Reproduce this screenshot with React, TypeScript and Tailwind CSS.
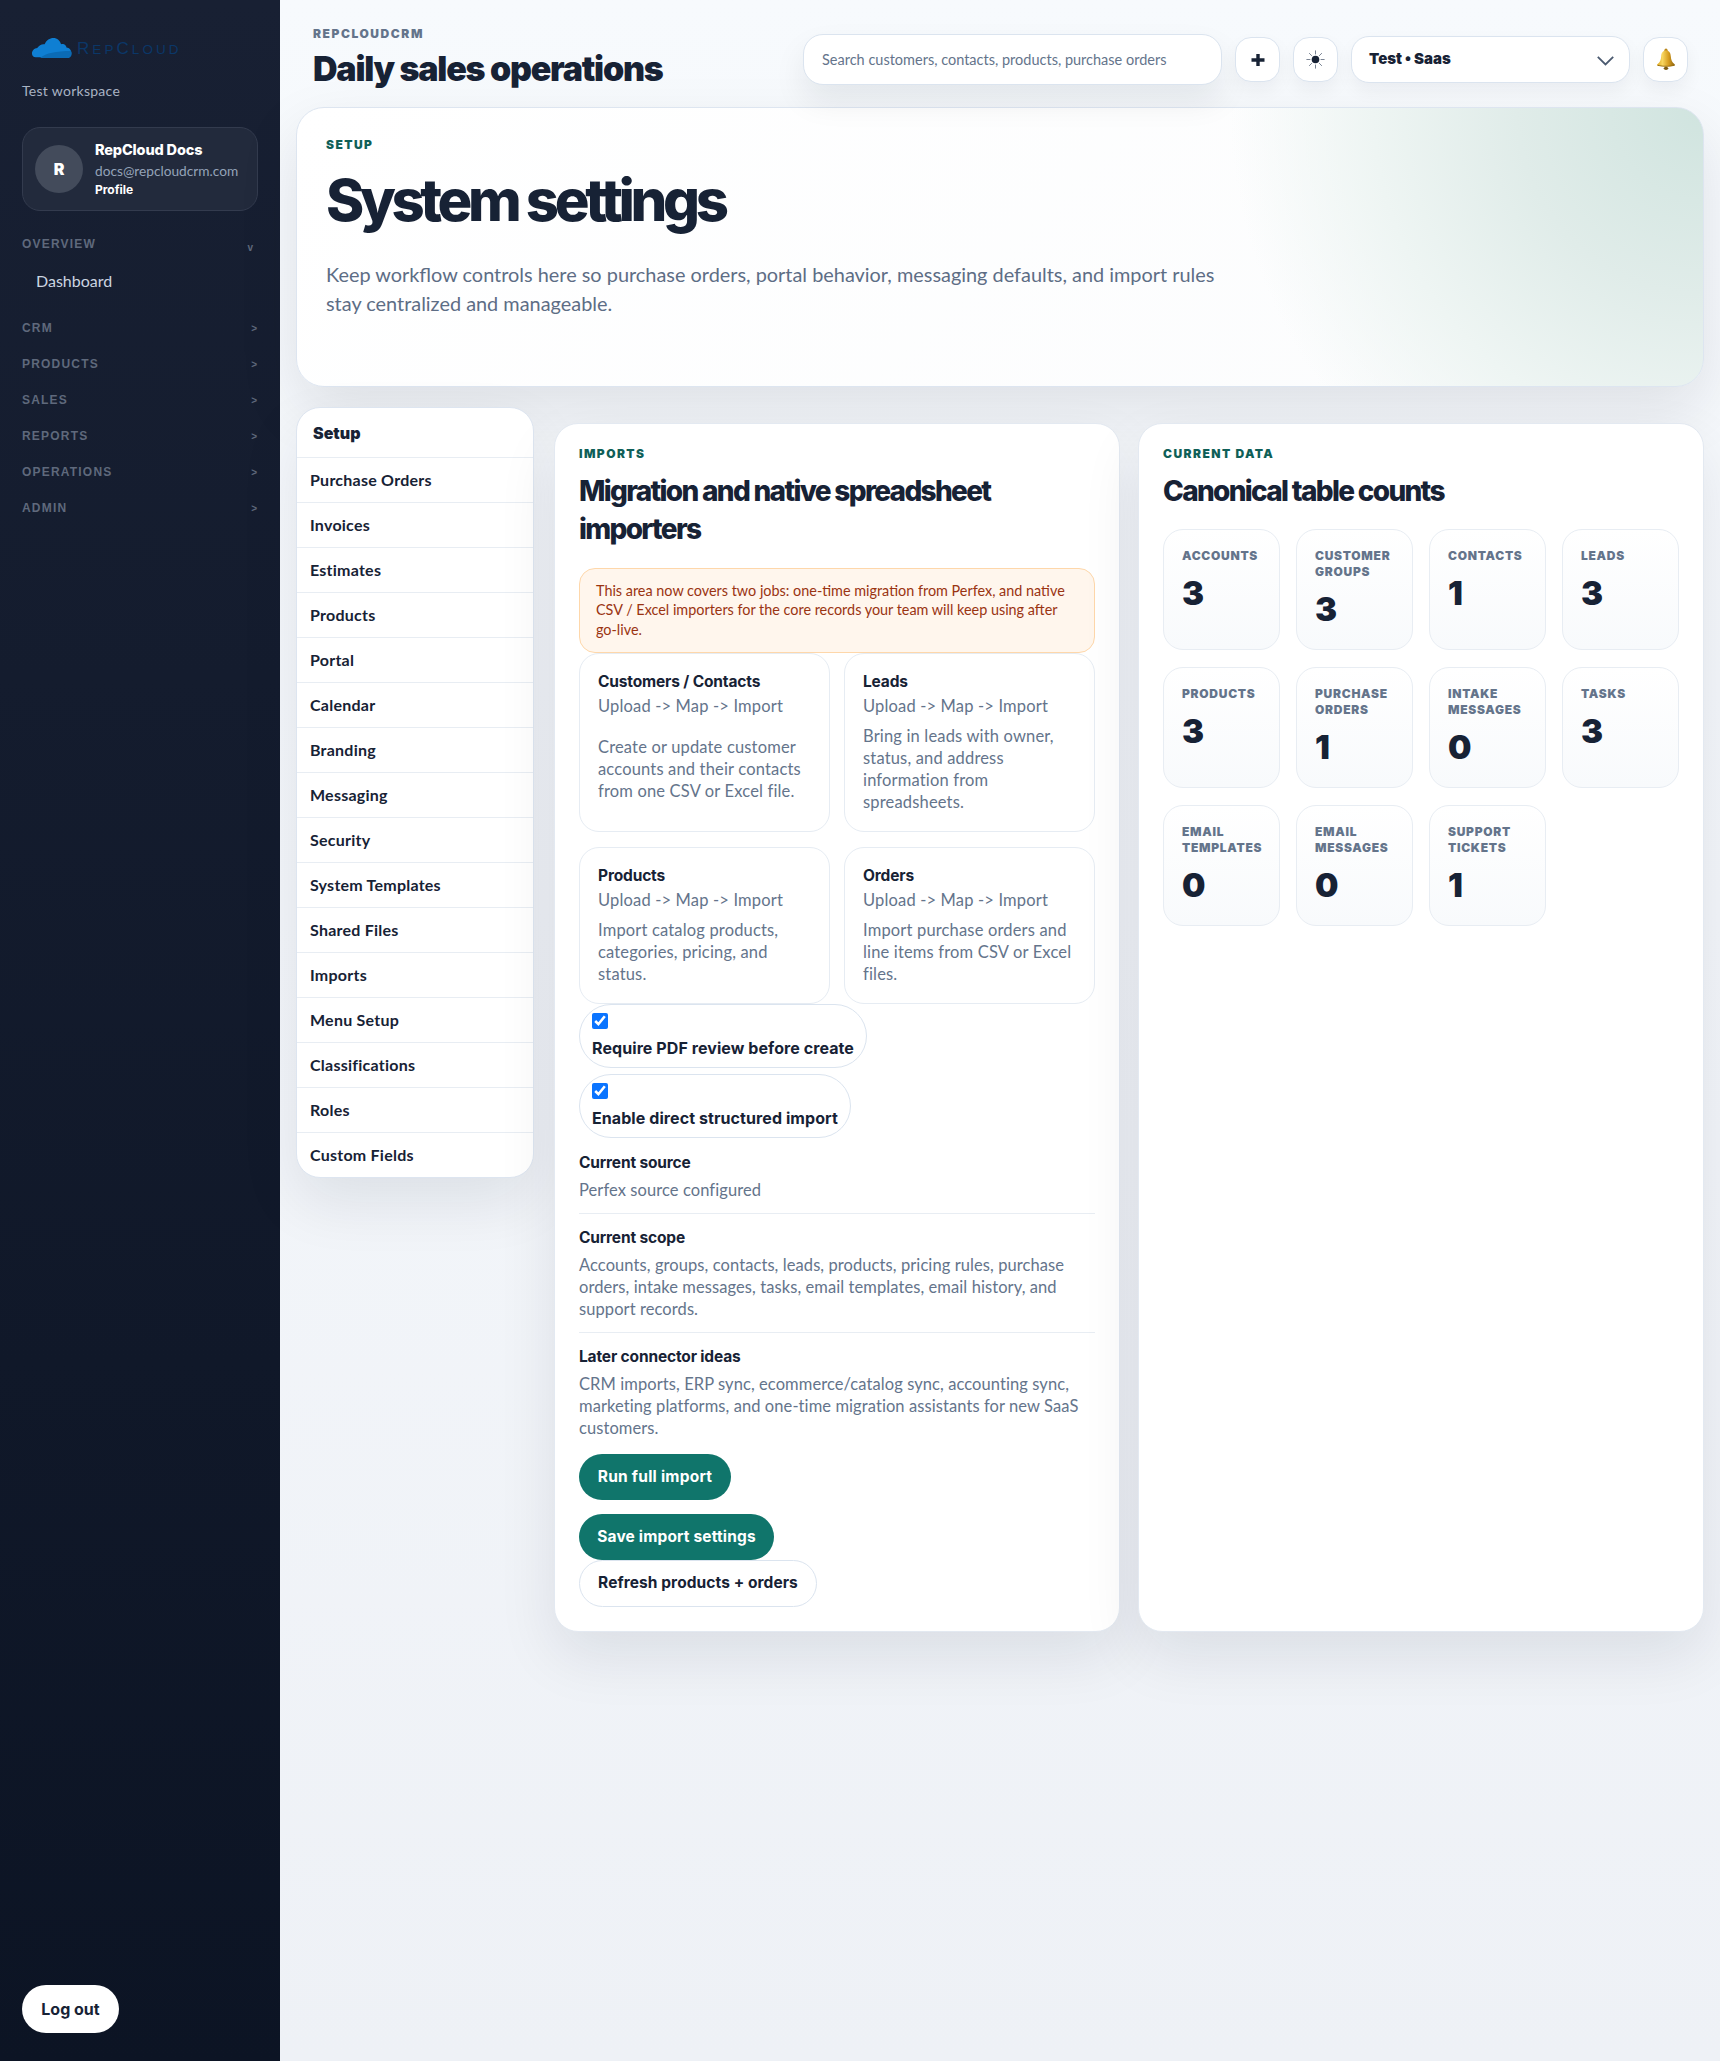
const sans = "font-['Lato','Noto_Sans',sans-serif]"
const heavy = "font-['Inter','Noto_Sans',sans-serif]"

const navGroups = ["CRM", "PRODUCTS", "SALES", "REPORTS", "OPERATIONS", "ADMIN"]

const setupLinks = [
  "Purchase Orders",
  "Invoices",
  "Estimates",
  "Products",
  "Portal",
  "Calendar",
  "Branding",
  "Messaging",
  "Security",
  "System Templates",
  "Shared Files",
  "Imports",
  "Menu Setup",
  "Classifications",
  "Roles",
  "Custom Fields",
]

const importers = [
  { title: "Customers / Contacts", text: "Create or update customer accounts and their contacts from one CSV or Excel file." },
  { title: "Leads", text: "Bring in leads with owner, status, and address information from spreadsheets." },
  { title: "Products", text: "Import catalog products, categories, pricing, and status." },
  { title: "Orders", text: "Import purchase orders and line items from CSV or Excel files." },
]

const counts = [
  { label: "Accounts", value: 3 },
  { label: "Customer groups", value: 3 },
  { label: "Contacts", value: 1 },
  { label: "Leads", value: 3 },
  { label: "Products", value: 3 },
  { label: "Purchase orders", value: 1 },
  { label: "Intake messages", value: 0 },
  { label: "Tasks", value: 3 },
  { label: "Email templates", value: 0 },
  { label: "Email messages", value: 0 },
  { label: "Support tickets", value: 1 },
]

function Eyebrow({ children }: { children: React.ReactNode }) {
  return <div className={`${heavy} text-[12px] leading-[16px] font-black uppercase tracking-[0.12em] text-[#0f5f58]`}>{children}</div>
}

function Logo() {
  return (
    <div className="flex h-[22px] items-center">
      <svg width="42" height="22" viewBox="0 0 42 22">
        <path d="M1 17c0-3 2.400-5.400 5.400-5.600C8.500 8.200 11.500 7 14 7.600 15.800 3.200 19.500 1 23 1c4 0 7 2.800 8 6.400 1-.3 2.200-.2 3 .2 1.300.6 2.300 1.800 2.600 3.100 2.900.3 5 2.700 5 5.600 0 2.300-1 4.700-3.500 4.700H5c-2.500 0-4-2-4-4z" fill="#0f7fd3" transform="scale(0.97)" />
        <path d="M9 21c6-5 16-7 31-7 1 3 1 5-2 7z" fill="#0b6bb5" />
      </svg>
      <span className="ml-[4px] font-['Liberation_Sans',sans-serif] text-[17px] leading-none tracking-[0.18em] text-[#0b3768]">
        R<span className="text-[13.500px]">EP</span>C<span className="text-[13.500px]">LOUD</span>
      </span>
    </div>
  )
}

function Sidebar() {
  return (
    <aside className="flex w-[280px] shrink-0 flex-col justify-between bg-gradient-to-b from-[#182033] to-[#0c1424] px-[22px] pt-[37px] pb-[28px]">
      <div>
        <div className="pl-[9px]">
          <Logo />
        </div>
        <div className="mt-[22px] text-[14px] leading-[20px] tracking-[0.02em] text-[#a9b3c3]">Test workspace</div>
        <div className="mt-[26px] flex h-[84px] items-center gap-[12px] rounded-[18px] border border-[#333b4e] bg-[#222a3c] pl-[12px]">
          <div className={`${heavy} flex h-[48px] w-[48px] items-center justify-center rounded-full bg-[#434b5b] text-[16px] font-black text-white`}>R</div>
          <div>
            <div className={`${heavy} text-[14.500px] leading-[20px] font-extrabold tracking-[-0.01em] text-white`}>RepCloud Docs</div>
            <div className="mt-[1px] text-[13.700px] leading-[20px] text-[#94a3b8]">docs@repcloudcrm.com</div>
            <div className={`${heavy} mt-[1px] text-[12px] leading-[16px] font-bold text-white`}>Profile</div>
          </div>
        </div>
        <div className="mt-[23px] flex h-[20px] items-center justify-between pr-[5px] font-['Liberation_Sans',sans-serif] text-[12px] font-bold tracking-[0.1em] text-[#5f697c]">
          <span>OVERVIEW</span>
          <span className="pt-[6px] text-[10px] tracking-normal">v</span>
        </div>
        <div className="mt-[17px] h-[20px] pl-[14px] text-[16px] leading-[20px] text-[#cbd5e1]">Dashboard</div>
        <div className="mt-[19px]">
          {navGroups.map((group) => (
            <div key={group} className="flex h-[36px] items-center justify-between pr-[1px] font-['Liberation_Sans',sans-serif] text-[12px] font-bold tracking-[0.1em] text-[#5f697c]">
              <span>{group}</span>
              <span className="text-[10px] tracking-normal">&gt;</span>
            </div>
          ))}
        </div>
      </div>
      <button className={`${heavy} h-[48px] w-[97px] rounded-full bg-white text-[16px] font-bold text-[#172235]`}>Log out</button>
    </aside>
  )
}

function IconButton({ children }: { children: React.ReactNode }) {
  return (
    <button className="flex h-[45px] w-[45px] shrink-0 items-center justify-center rounded-[16px] border border-[#dbe4ef] bg-white shadow-[0_8px_18px_rgba(15,23,42,0.05)]">
      {children}
    </button>
  )
}

function PlusIcon() {
  return (
    <svg width="14" height="14" viewBox="0 0 14 14" fill="none" stroke="#172235" strokeWidth="3.400">
      <path d="M7 1v12M.5 7h13" />
    </svg>
  )
}

function SunIcon() {
  return (
    <svg width="19" height="19" viewBox="0 0 19 19" stroke="#6b7688" strokeWidth="0.9" strokeLinecap="round">
      <circle cx="9.500" cy="9.500" r="3.800" fill="#172235" stroke="none" />
      <path d="M9.500 .8v3.200M9.500 15v3.200M.8 9.500h3.200M15 9.500h3.200M3.400 3.400l2.200 2.200M13.400 13.400l2.200 2.200M3.400 15.600l2.200-2.200M13.400 5.600l2.200-2.200" />
    </svg>
  )
}

function BellIcon() {
  return (
    <svg width="22" height="23" viewBox="0 0 22 23">
      <defs>
        <linearGradient id="bell" x1="0" y1="0" x2="1" y2="0">
          <stop offset="0" stopColor="#e0aa24" />
          <stop offset="0.3" stopColor="#f8d65f" />
          <stop offset="0.65" stopColor="#d69c1e" />
          <stop offset="1" stopColor="#8a6210" />
        </linearGradient>
      </defs>
      <circle cx="11" cy="2.200" r="1.600" fill="#b9861b" />
      <path d="M11 2.400c3.300 0 4.600 2.600 4.800 5.800.2 3.700 1.300 6 3.800 8 .6.500.300 1.400-.6 1.600-2.300.5-5 .7-8 .7s-5.700-.2-8-.7c-.9-.2-1.200-1.100-.6-1.600 2.500-2 3.600-4.300 3.800-8 .2-3.200 1.500-5.800 4.800-5.800z" fill="url(#bell)" />
      <path d="M2.700 16.700c4.500 1.300 12.100 1.300 16.600 0 .4.800-.1 1.200-.9 1.300-2.200.5-4.800.7-7.400.7s-5.200-.2-7.400-.7c-.8-.1-1.300-.5-.9-1.300z" fill="#9a6f12" />
      <ellipse cx="11" cy="20.300" rx="2.200" ry="1.600" fill="#7d5a10" />
    </svg>
  )
}

function Topbar() {
  return (
    <header className="flex h-[107px] items-start justify-between pr-[32px] pl-[33px]">
      <div className="pt-[26px]">
        <div className={`${heavy} text-[12px] leading-[16px] font-black tracking-[0.13em] text-[#64748b]`}>REPCLOUDCRM</div>
        <h1 className={`${heavy} mt-[5px] text-[34px] leading-[44px] font-black tracking-[-0.036em] text-[#172235]`}>Daily sales operations</h1>
      </div>
      <div className="flex items-center gap-[13px] pt-[34px]">
        <div className="flex h-[51px] w-[419px] items-center rounded-[20px] border border-[#dbe4ef] bg-white pl-[18px] text-[14.500px] text-[#64748b] shadow-[0_16px_32px_rgba(15,23,42,0.08)]">
          Search customers, contacts, products, purchase orders
        </div>
        <IconButton>
          <PlusIcon />
        </IconButton>
        <IconButton>
          <SunIcon />
        </IconButton>
        <div className={`${heavy} flex h-[47px] w-[279px] items-center justify-between rounded-[18px] border border-[#dbe4ef] bg-white pr-[15px] pl-[17px] text-[15px] font-black text-[#172235] shadow-[0_8px_18px_rgba(15,23,42,0.05)]`}>
          Test • Saas
          <svg width="17" height="10" viewBox="0 0 17 10" fill="none" stroke="#4b5a70" strokeWidth="1.800" className="mt-[2px]">
            <path d="M.8.8l7.700 7.700 7.700-7.700" />
          </svg>
        </div>
        <IconButton>
          <BellIcon />
        </IconButton>
      </div>
    </header>
  )
}

function Hero() {
  return (
    <section className="h-[280px] rounded-[28px] border border-[#dde5f0] bg-[radial-gradient(circle_at_top_right,#d0e4df_0%,#e0ece9_13%,#eef5f3_23%,rgba(255,255,255,0)_33%),linear-gradient(135deg,#ffffff,#fbfcfd)] px-[29px] pt-[29px] shadow-[0_24px_60px_rgba(15,23,42,0.1)]">
      <Eyebrow>Setup</Eyebrow>
      <h2 className={`${heavy} mt-[9px] text-[58px] leading-[76px] font-extrabold tracking-[-0.075em] text-[#172235]`}>System settings</h2>
      <p className="mt-[22px] w-[910px] text-[19.900px] leading-[29px] text-[#5d6d85]">
        Keep workflow controls here so purchase orders, portal behavior, messaging defaults, and import rules stay centralized and manageable.
      </p>
    </section>
  )
}

function SetupNav() {
  return (
    <nav className="w-[238px] shrink-0 self-start rounded-[24px] border border-[#dde5f0] bg-white shadow-[0_24px_60px_rgba(15,23,42,0.09)]">
      <div className={`${heavy} flex h-[49px] items-center pl-[16px] text-[16px] font-black text-[#172235]`}>Setup</div>
      {setupLinks.map((link) => (
        <div key={link} className="flex h-[45px] items-center border-t border-[#e8edf3] pl-[13px] text-[16px] font-bold tracking-[0.015em] text-[#172235]">
          {link}
        </div>
      ))}
    </nav>
  )
}

function ImportCard({ title, text }: { title: string; text: string }) {
  return (
    <div className="flex flex-col rounded-[20px] border border-[#e6ecf3] bg-white px-[18px] pt-[17px] pb-[18px]">
      <div className={`${heavy} text-[15.500px] leading-[22px] font-bold tracking-[-0.01em] text-[#172235]`}>{title}</div>
      <div className="mt-[2px] text-[16.500px] leading-[22px] tracking-[0.01em] text-[#64748b]">Upload -&gt; Map -&gt; Import</div>
      <p className="my-auto pt-[8px] text-[16.500px] leading-[22px] tracking-[0.01em] text-[#64748b]">{text}</p>
    </div>
  )
}

function CheckPill({ label }: { label: string }) {
  return (
    <label className="block w-fit rounded-[32px] border border-[#dbe4ef] bg-white px-[12px] py-[8px]">
      <input type="checkbox" defaultChecked readOnly className="block h-[16px] w-[16px] accent-[#0a74ff]" />
      <div className={`${heavy} mt-[8px] text-[16px] leading-[22px] font-bold tracking-[0.005em] text-[#172235]`}>{label}</div>
    </label>
  )
}

function InfoBlock({ title, text, border }: { title: string; text: string; border?: boolean }) {
  return (
    <div className={border ? "border-b border-[#e8edf3] pb-[12px]" : ""}>
      <div className={`${heavy} pt-[1px] text-[15.500px] leading-[22px] font-bold tracking-[-0.01em] text-[#172235]`}>{title}</div>
      <p className="mt-[5px] text-[16.500px] leading-[22px] tracking-[0.005em] text-[#64748b]">{text}</p>
    </div>
  )
}

function ImportsPanel() {
  return (
    <section className="rounded-[24px] border border-[#e3e9f1] bg-white px-[24px] pt-[22px] pb-[24px] shadow-[0_24px_60px_rgba(15,23,42,0.09)]">
      <Eyebrow>Imports</Eyebrow>
      <h3 className={`${heavy} mt-[10px] text-[28px] leading-[38.400px] font-extrabold tracking-[-0.06em] text-[#172235]`}>Migration and native spreadsheet importers</h3>
      <div className="mt-[19px] rounded-[16px] border border-[#fed7aa] bg-[#fff6ed] px-[16px] py-[12px] text-[14.400px] leading-[19.600px] text-[#9a3412]">
        This area now covers two jobs: one-time migration from Perfex, and native CSV / Excel importers for the core records your team will keep using after go-live.
      </div>
      <div className="grid grid-cols-2 gap-x-[14px] gap-y-[15px]">
        {importers.map((item) => (
          <ImportCard key={item.title} title={item.title} text={item.text} />
        ))}
      </div>
      <div className="space-y-[6px]">
        <CheckPill label="Require PDF review before create" />
        <CheckPill label="Enable direct structured import" />
      </div>
      <div className="mt-[13px] space-y-[12px]">
        <InfoBlock title="Current source" text="Perfex source configured" border />
        <InfoBlock title="Current scope" text="Accounts, groups, contacts, leads, products, pricing rules, purchase orders, intake messages, tasks, email templates, email history, and support records." border />
        <InfoBlock title="Later connector ideas" text="CRM imports, ERP sync, ecommerce/catalog sync, accounting sync, marketing platforms, and one-time migration assistants for new SaaS customers." />
      </div>
      <button className={`${heavy} mt-[15px] block h-[46px] w-[152px] rounded-full bg-[#10756b] text-[15.500px] font-bold tracking-[0.015em] text-white`}>Run full import</button>
      <button className={`${heavy} mt-[14px] block h-[46px] w-[195px] rounded-full bg-[#10756b] text-[15.500px] font-bold tracking-[0.01em] text-white`}>Save import settings</button>
      <button className={`${heavy} block h-[47px] w-[238px] rounded-full border border-[#dbe4ef] bg-white text-[15.500px] font-bold tracking-[0.005em] text-[#172235]`}>Refresh products + orders</button>
    </section>
  )
}

function CountsPanel() {
  return (
    <section className="rounded-[24px] border border-[#e3e9f1] bg-white px-[24px] pt-[22px] pb-[24px] shadow-[0_24px_60px_rgba(15,23,42,0.09)]">
      <Eyebrow>Current data</Eyebrow>
      <h3 className={`${heavy} mt-[10px] text-[28px] leading-[38.400px] font-extrabold tracking-[-0.06em] text-[#172235]`}>Canonical table counts</h3>
      <div className="mt-[19px] grid grid-cols-4 gap-x-[16px] gap-y-[17px]">
        {counts.map((item) => (
          <div key={item.label} className="rounded-[20px] border border-[#e8edf3] bg-gradient-to-b from-white to-[#f8fafc] p-[18px]">
            <div className={`${heavy} text-[12px] leading-[16px] font-black uppercase tracking-[0.06em] text-[#64748b]`}>{item.label}</div>
            <div className={`${heavy} mt-[8px] text-[33px] leading-[43px] font-black text-[#172235]`}>{item.value}</div>
          </div>
        ))}
      </div>
    </section>
  )
}

export default function App() {
  return (
    <div className={`flex min-h-screen ${sans}`}>
      <Sidebar />
      <main className="min-w-0 flex-1 bg-gradient-to-b from-[#f7fafd] to-[#eef1f6]">
        <Topbar />
        <div className="px-[16px]">
          <Hero />
          <div className="mt-[20px] flex items-start gap-[20px]">
            <SetupNav />
            <div className="mt-[16px] grid min-w-0 flex-1 grid-cols-2 gap-[18px]">
              <ImportsPanel />
              <CountsPanel />
            </div>
          </div>
        </div>
      </main>
    </div>
  )
}
